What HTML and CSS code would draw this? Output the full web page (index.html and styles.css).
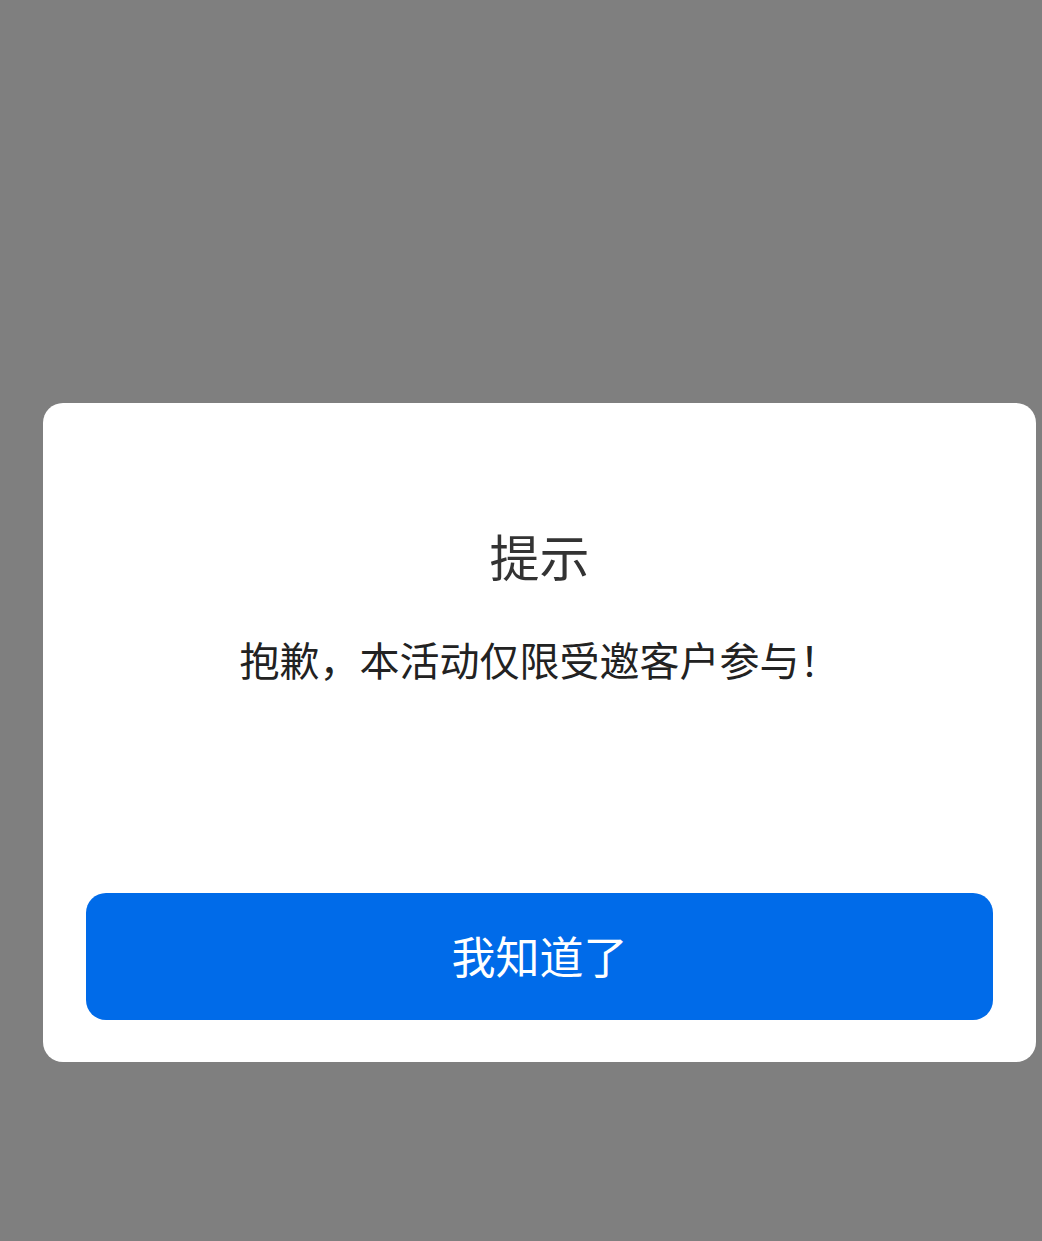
FILE: index.html
```html
<!DOCTYPE html>
<html>

<head>
    <meta charset='utf-8'>
    <title>提示</title>
    <meta name='viewport' content='width=device-width, initial-scale=1'>
    <link rel="stylesheet" href="styles.css">
</head>

<body>
    <div class="mask">
        <div class="dialog">
            <h2 class="dialog_title">提示</h2>
            <p class="dialog_msg">抱歉，本活动仅限受邀客户参与！</p>
            <button type="button" class="btn_ok">我知道了</button>
        </div>
    </div>
</body>

</html>
```

FILE: styles.css
```css
* {
    margin: 0;
    padding: 0;
    box-sizing: border-box;
}

body {
    background-color: #7f7f7f;
    font-family: "Noto Sans CJK SC", "Noto Sans", sans-serif;
}

.mask {
    width: 1042px;
    height: 1241px;
    padding-top: 403px;
    padding-left: 43px;
}

.dialog {
    width: 993px;
    height: 659px;
    background-color: #fff;
    border-radius: 20px;
    padding: 127px 43px 0;
    text-align: center;
}

.dialog_title {
    font-size: 50px;
    line-height: 50px;
    font-weight: normal;
    color: #333;
}

.dialog_msg {
    margin-top: 59px;
    font-size: 40px;
    line-height: 40px;
    color: #222;
}

.btn_ok {
    display: block;
    width: 100%;
    height: 127px;
    margin-top: 214px;
    padding-bottom: 4px;
    border: none;
    border-radius: 20px;
    background-color: #006be9;
    color: #fff;
    font-family: inherit;
    font-size: 44px;
}
```
